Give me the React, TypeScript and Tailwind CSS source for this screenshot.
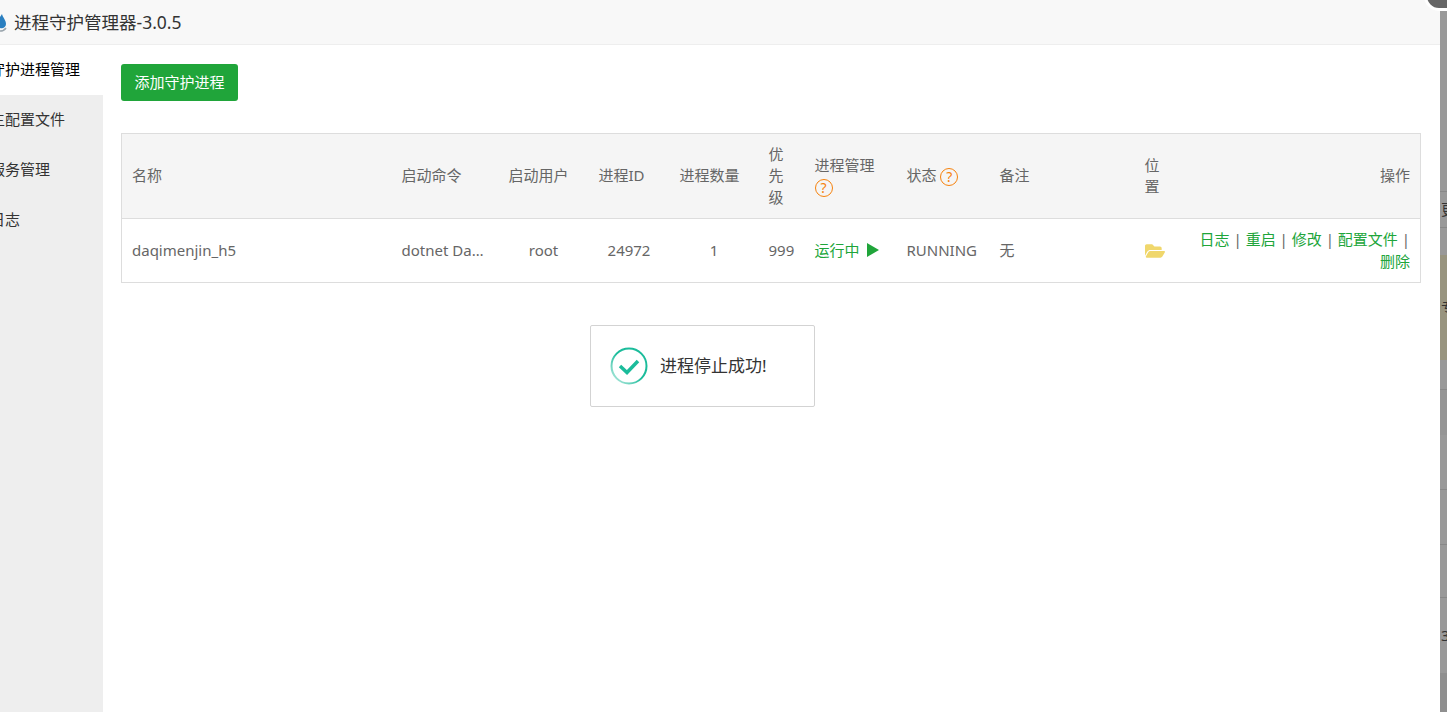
import { FaFolderOpen } from "react-icons/fa";

const font = "[font-family:'Noto_Sans','Noto_Sans_CJK_SC',sans-serif]";

const Help = () => (
  <span className="inline-flex h-[18px] w-[18px] items-center justify-center rounded-full border border-[#f5820d] align-middle text-[14px] leading-none text-[#f5820d]">
    ?
  </span>
);

const Stripe = () => (
  <div className="flex h-full w-[7px] shrink-0 flex-col overflow-hidden bg-[#999999] text-[15px] leading-none text-[#333]">
    <div className="h-[192px] border-b border-[#888]" />
    <div className="flex h-[36px] items-center whitespace-nowrap border-b border-[#888] pl-px">更</div>
    <div className="h-[27px]" />
    <div className="flex h-[105px] items-center whitespace-nowrap bg-[#98947f] pl-px">专</div>
    <div className="h-[30px] border-b border-[#888]" />
    <div className="h-[45px] bg-[#959595]" />
    <div className="h-[55px] border-b border-[#888]" />
    <div className="h-[55px] border-b border-[#888]" />
    <div className="h-[53px] border-b border-[#888]" />
    <div className="flex h-[75px] items-center whitespace-nowrap pl-px">3</div>
    <div className="flex-1 bg-[#8f8f8f]" />
  </div>
);

const sideItems = ["守护进程管理", "主配置文件", "服务管理", "运行日志"];

export default function App() {
  return (
    <div className={`relative flex h-[712px] w-[1447px] overflow-hidden bg-white text-[15px] leading-[1.4286] text-[#666] ${font}`}>
      <div className="flex min-w-0 flex-1 flex-col">
        {/* title bar */}
        <div className="flex h-[45px] shrink-0 items-center border-b border-[#eee] bg-[#f8f8f8]">
          <svg width="7" height="22" viewBox="0 0 7 22" className="mt-[3px] shrink-0">
            <path d="M2 1 C3 5 6 7 6 11 C6 14 3 16 0 15 L0 4 Z" fill="#2a7fc0" />
            <path d="M0 18 C2 18 4 18 6 15" fill="none" stroke="#9aa5ad" strokeWidth="1.5" />
          </svg>
          <span className="ml-[7px] text-[17.5px] text-[#333]">进程守护管理器-3.0.5</span>
        </div>

        <div className="flex min-h-0 flex-1">
          {/* sidebar */}
          <div className="w-[103px] shrink-0 overflow-hidden bg-[#eeeeee] text-[#333]">
            {sideItems.map((item, i) => (
              <div
                key={item}
                className={`flex h-[50px] items-center whitespace-nowrap ${i === 0 ? "bg-white text-black" : ""}`}
              >
                <span className="ml-[-10px]">{i === 3 ? "日志" : item}</span>
              </div>
            ))}
          </div>

          {/* content */}
          <div className="min-w-0 flex-1 pl-[18px] pr-[19px] pt-[19px]">
            <button className="h-[37px] w-[117px] rounded-[3px] bg-[#20a53a] text-white">添加守护进程</button>

            <table className="mt-[32px] w-[1300px] table-fixed border-collapse border border-[#ddd]">
              <colgroup>
                <col className="w-[270px]" />
                <col className="w-[107px]" />
                <col className="w-[90px]" />
                <col className="w-[81px]" />
                <col className="w-[89px]" />
                <col className="w-[46px]" />
                <col className="w-[92px]" />
                <col className="w-[93px]" />
                <col className="w-[145px]" />
                <col className="w-[46px]" />
                <col />
              </colgroup>
              <thead>
                <tr className="h-[85px] bg-[#f5f5f5] font-normal">
                  <th className="border-b border-[#ddd] px-[10px] text-left font-normal">名称</th>
                  <th className="border-b border-[#ddd] px-[10px] text-left font-normal">启动命令</th>
                  <th className="border-b border-[#ddd] px-[10px] text-left font-normal">启动用户</th>
                  <th className="border-b border-[#ddd] px-[10px] text-left font-normal">进程ID</th>
                  <th className="border-b border-[#ddd] px-[10px] text-left font-normal">进程数量</th>
                  <th className="border-b border-[#ddd] px-[10px] text-left font-normal">优先级</th>
                  <th className="border-b border-[#ddd] px-[10px] text-left font-normal">
                    进程管理 <Help />
                  </th>
                  <th className="border-b border-[#ddd] px-[10px] text-left font-normal whitespace-nowrap">
                    状态 <Help />
                  </th>
                  <th className="border-b border-[#ddd] px-[10px] text-left font-normal">备注</th>
                  <th className="border-b border-[#ddd] px-[10px] text-left font-normal">位置</th>
                  <th className="border-b border-[#ddd] px-[10px] text-right font-normal">操作</th>
                </tr>
              </thead>
              <tbody>
                <tr className="h-[64px]">
                  <td className="px-[10px]">daqimenjin_h5</td>
                  <td className="truncate px-[10px]">dotnet DaQiMenJin.dll</td>
                  <td className="px-[10px] text-center">root</td>
                  <td className="px-[10px] text-center">24972</td>
                  <td className="px-[10px] text-center">1</td>
                  <td className="pl-[10px] whitespace-nowrap">999</td>
                  <td className="px-[10px] whitespace-nowrap text-[#20a53a]">
                    <span className="inline-flex items-center gap-[7px]">
                      运行中
                      <svg width="12" height="14" viewBox="0 0 12 14">
                        <path d="M0 0 L12 7 L0 14 Z" fill="#20a53a" />
                      </svg>
                    </span>
                  </td>
                  <td className="px-[10px]">RUNNING</td>
                  <td className="px-[10px]">无</td>
                  <td className="px-[10px]">
                    <FaFolderOpen className="h-[20px] w-[20px] text-[#f0d76c]" />
                  </td>
                  <td className="px-[10px] text-right">
                    <a className="text-[#20a53a]">日志</a> | <a className="text-[#20a53a]">重启</a> |{" "}
                    <a className="text-[#20a53a]">修改</a> | <a className="text-[#20a53a]">配置文件</a> |{" "}
                    <a className="text-[#20a53a]">删除</a>
                  </td>
                </tr>
              </tbody>
            </table>
          </div>
        </div>
      </div>

      <Stripe />

      {/* toast */}
      <div className="absolute left-[590px] top-[325px] flex h-[82px] w-[225px] items-center rounded-[2px] border border-[#d3d3d3] bg-white pl-[19px] text-[17px] text-[#333]">
        <svg width="38" height="38" viewBox="0 0 38 38" className="shrink-0">
          <defs>
            <linearGradient id="ring" x1="1" y1="0" x2="0" y2="1">
              <stop offset="0.5" stopColor="#1bbc9b" />
              <stop offset="1" stopColor="#1bbc9b" stopOpacity="0.25" />
            </linearGradient>
          </defs>
          <circle cx="19" cy="19" r="17.5" fill="none" stroke="url(#ring)" strokeWidth="2" />
          <path d="M10 19 L17 25.5 L28 14" fill="none" stroke="#1bbc9b" strokeWidth="3.5" />
        </svg>
        <span className="ml-[12px]">进程停止成功!</span>
      </div>

      {/* close button */}
      <div className="absolute right-[-14px] top-[-19px] h-[30px] w-[37px] rounded-full border-[3px] border-white bg-[#666]" />
    </div>
  );
}
